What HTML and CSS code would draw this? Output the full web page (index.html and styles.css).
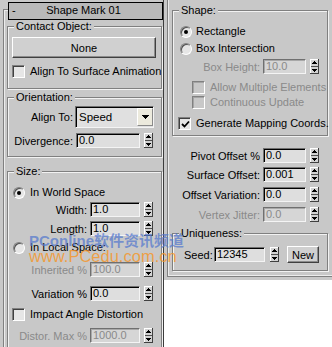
FILE: index.html
```html
<!DOCTYPE html>
<html>
<head>
<meta charset="utf-8">
<link rel="stylesheet" href="styles.css">
</head>
<body>
<svg class="defs" width="0" height="0">
  <symbol id="spin" viewBox="0 0 9 15">
    <rect width="9" height="15" fill="#404040"/>
    <rect width="8" height="14" fill="#ffffff"/>
    <rect x="1" y="1" width="7" height="13" fill="#d2d2d2"/>
    <rect x="1" y="7" width="7" height="1" fill="#505050"/>
    <rect x="4" y="2" width="1" height="1" fill="#000"/>
    <rect x="3" y="3" width="3" height="1" fill="#000"/>
    <rect x="2" y="4" width="5" height="1" fill="#000"/>
    <rect x="2" y="10" width="5" height="1" fill="#000"/>
    <rect x="3" y="11" width="3" height="1" fill="#000"/>
    <rect x="4" y="12" width="1" height="1" fill="#000"/>
  </symbol>
</svg>
<div class="screen">
  <div class="left">
    <div class="roll">
      <div class="header"><span class="minus">-</span><span class="htitle">Shape Mark 01</span><span></span></div>

      <div class="group g-contact">
        <div class="gtitle">Contact Object:</div>
        <div class="btn none">None</div>
        <div class="crow cr-align"><span class="cb"></span><span>Align To Surface Animation</span></div>
      </div>

      <div class="group g-orient">
        <div class="gtitle">Orientation:</div>
        <div class="frow fr-align">
          <span class="lbl l65">Align To:</span>
          <div class="dropdown">
            <span class="dd-text">Speed</span>
            <span class="dd-btn"><svg width="7" height="4" viewBox="0 0 7 4"><rect width="7" height="1"/><rect x="1" y="1" width="5" height="1"/><rect x="2" y="2" width="3" height="1"/><rect x="3" y="3" width="1" height="1"/></svg></span>
          </div>
        </div>
        <div class="frow fr-div">
          <span class="lbl l65">Divergence:</span>
          <span class="field w64">0.0</span>
          <svg class="spin"><use href="#spin"/></svg>
        </div>
      </div>

      <div class="group g-size">
        <div class="gtitle">Size:</div>
        <div class="rrow rr-world"><span class="rb on"></span><span>In World Space</span></div>
        <div class="frow fr-width">
          <span class="lbl l79">Width:</span>
          <span class="field w50">1.0</span>
          <svg class="spin"><use href="#spin"/></svg>
        </div>
        <div class="frow fr-length">
          <span class="lbl l79">Length:</span>
          <span class="field w50">1.0</span>
          <svg class="spin"><use href="#spin"/></svg>
        </div>
        <div class="rrow rr-local"><span class="rb"></span><span>In Local Space:</span></div>
        <div class="frow fr-inh">
          <span class="lbl l79 dim">Inherited %</span>
          <span class="field w50 dis">100.0</span>
          <svg class="spin"><use href="#spin"/></svg>
        </div>
        <div class="frow fr-var">
          <span class="lbl l79">Variation %</span>
          <span class="field w50">0.0</span>
          <svg class="spin"><use href="#spin"/></svg>
        </div>
        <div class="crow cr-impact"><span class="cb"></span><span>Impact Angle Distortion</span></div>
        <div class="frow fr-distor">
          <span class="lbl l79 dim">Distor. Max %</span>
          <span class="field w50 dis">1000.0</span>
          <svg class="spin"><use href="#spin"/></svg>
        </div>
      </div>
    </div>
  </div>

  <div class="right">
    <div class="roll2">
      <div class="group g-shape">
        <div class="gtitle">Shape:</div>
        <div class="rrow rr-rect"><span class="rb on"></span><span>Rectangle</span></div>
        <div class="rrow rr-box"><span class="rb"></span><span>Box Intersection</span></div>
        <div class="frow fr-boxh">
          <span class="lbl l87 dim">Box Height:</span>
          <span class="field w43 dis">10.0</span>
          <svg class="spin"><use href="#spin"/></svg>
        </div>
        <div class="crow cr-allow"><span class="cb dis"></span><span class="dim">Allow Multiple Elements</span></div>
        <div class="crow cr-cont"><span class="cb dis"></span><span class="dim">Continuous Update</span></div>
        <div class="crow cr-gen"><span class="cb"><svg width="9" height="9" viewBox="0 0 9 9"><polyline points="1,4 3.5,6.5 8,1.5" fill="none" stroke="#000" stroke-width="1.8"/></svg></span><span>Generate Mapping Coords.</span></div>
      </div>

      <div class="frow fr-pivot">
        <span class="lbl l92">Pivot Offset %</span>
        <span class="field w43">0.0</span>
        <svg class="spin"><use href="#spin"/></svg>
      </div>
      <div class="frow fr-surf">
        <span class="lbl l92">Surface Offset:</span>
        <span class="field w43">0.001</span>
        <svg class="spin"><use href="#spin"/></svg>
      </div>
      <div class="frow fr-offv">
        <span class="lbl l92">Offset Variation:</span>
        <span class="field w43">0.0</span>
        <svg class="spin"><use href="#spin"/></svg>
      </div>
      <div class="frow fr-vj">
        <span class="lbl l92 dim">Vertex Jitter:</span>
        <span class="field w43 dis">0.0</span>
        <svg class="spin"><use href="#spin"/></svg>
      </div>

      <div class="group g-uniq">
        <div class="gtitle">Uniqueness:</div>
        <div class="seedrow">
          <span class="seedlbl">Seed:</span>
          <span class="field w51">12345</span>
          <svg class="spin"><use href="#spin"/></svg>
          <span class="btn newbtn">New</span>
        </div>
      </div>
    </div>
  </div>

  <div class="wm wm1">PConline软件资讯频道</div>
  <div class="wm wm2">www.PCedu.com.cn</div>
</div>
</body>
</html>
```

FILE: styles.css
```css
* { box-sizing: border-box; }

body {
  margin: 0;
  background: #ffffff;
  font-family: "Liberation Sans", Arial, sans-serif;
  font-size: 11px;
  color: #000;
}

.defs { position: absolute; width: 0; height: 0; overflow: hidden; }

.screen {
  position: relative;
  display: flex;
  align-items: flex-start;
  width: 332px;
  height: 347px;
  overflow: hidden;
}

/* ---------- left panel ---------- */
.left {
  width: 164px;
  height: 347px;
  flex: none;
  background: #c8c8c8;
  border-right: 1px solid #3c3c3c;
  padding: 9px 0 0 3px;
  overflow: hidden;
}

.roll {
  height: 340px;
  border-left: 1px solid #808080;
  border-top: 1px solid #808080;
  box-shadow: inset 1px 1px 0 #ececec;
  display: flex;
  flex-direction: column;
}

.header {
  margin: -8px 0 0 4px;
  width: 155px;
  height: 18px;
  flex: none;
  border: 1px solid #000;
  background: #b9b9b9;
  display: grid;
  grid-template-columns: 10px 1fr 14px;
  line-height: 15px;
}
.minus { padding-left: 3px; }
.htitle { text-align: center; }

/* ---------- groups ---------- */
.group {
  flex: none;
  border: 1px solid #808080;
  box-shadow: 1px 1px 0 #f2f2f2, inset 1px 1px 0 #f2f2f2;
  display: flex;
  flex-direction: column;
}
.gtitle {
  align-self: flex-start;
  margin: -7px 0 0 6px;
  padding: 0 2px;
  height: 13px;
  line-height: 13px;
  background: #c8c8c8;
}

.g-contact { margin: 6px 0 0 3px; width: 155px; height: 63px; }
.g-orient  { margin: 8px 0 0 3px; width: 155px; height: 60px; }
.g-size    { margin: 14px 0 0 3px; width: 155px; height: 200px; }

.g-shape { margin: 10px 0 0 4px; width: 156px; height: 126px; }
.g-uniq  { margin: 11px 0 0 4px; width: 156px; height: 38px; }

/* ---------- buttons ---------- */
.btn {
  border: 1px solid;
  border-color: #ffffff #404040 #404040 #ffffff;
  box-shadow: inset -1px -1px 0 #8c8c8c;
  background: #d0d0d0;
  display: flex;
  align-items: center;
  justify-content: center;
}
.none { margin: 4px 0 0 4px; width: 144px; height: 21px; flex: none; }

/* ---------- rows ---------- */
.crow, .rrow {
  display: flex;
  align-items: center;
  height: 13px;
  line-height: 13px;
  flex: none;
  white-space: nowrap;
}
.crow { gap: 5px; }
.rrow { gap: 5px; }

.cr-align  { margin: 7px 0 0 4px; }
.cr-impact { margin: 7px 0 0 4px; }
.cr-allow  { margin: 7px 0 0 19px; }
.cr-cont   { margin: 2px 0 0 19px; }
.cr-gen    { margin: 8px 0 0 5px; }

.rr-world { margin: 8px 0 0 5px; }
.rr-local { margin: 5px 0 0 5px; }
.rr-rect  { margin: 8px 0 0 7px; gap: 4px; }
.rr-box   { margin: 4px 0 0 7px; gap: 4px; }

.frow {
  display: flex;
  align-items: center;
  height: 15px;
  flex: none;
  white-space: nowrap;
}
.fr-align  { margin-top: 2px; height: 22px; }
.fr-div    { margin-top: 5px; }
.fr-width  { margin-top: 3px; }
.fr-length { margin-top: 4px; }
.fr-inh    { margin-top: 8px; }
.fr-var    { margin-top: 9px; }
.fr-distor { margin-top: 7px; }
.fr-boxh   { margin-top: 4px; }
.fr-pivot  { margin-top: 12px; }
.fr-surf   { margin-top: 4px; }
.fr-offv   { margin-top: 5px; }
.fr-vj     { margin-top: 5px; }

.lbl { flex: none; text-align: right; }
.l65 { width: 65px; }
.l79 { width: 79px; }
.l87 { width: 87px; }
.l92 { width: 92px; }

.dim { color: #8a8a8a; }

/* ---------- fields ---------- */
.field {
  flex: none;
  height: 15px;
  margin-left: 3px;
  padding-left: 2px;
  line-height: 13px;
  border: 1px solid;
  border-color: #707070 #f4f4f4 #f4f4f4 #707070;
  box-shadow: inset 1px 1px 0 #000;
  background: #dedede;
  overflow: hidden;
}
.field.dis {
  color: #8a8a8a;
  box-shadow: inset 1px 1px 0 #a8a8a8;
  background: #d6d6d6;
}
.w43 { width: 43px; }
.w50 { width: 50px; }
.w51 { width: 51px; }
.w64 { width: 64px; }

.spin { flex: none; width: 9px; height: 15px; margin-left: 4px; }

/* ---------- dropdown ---------- */
.dropdown {
  margin-left: 2px;
  width: 79px;
  height: 22px;
  flex: none;
  display: flex;
  border: 1px solid;
  border-color: #707070 #f4f4f4 #f4f4f4 #707070;
  box-shadow: inset 1px 1px 0 #000;
  background: #e0e0e0;
}
.dd-text { flex: 1; padding: 1px 0 0 3px; line-height: 18px; font-size: 11.5px; }
.dd-btn {
  width: 16px;
  margin: 1px 0 1px 0;
  flex: none;
  background: #eceadd;
  border: 1px solid;
  border-color: #ffffff #8a8a8a #8a8a8a #ffffff;
  display: flex;
  align-items: center;
  justify-content: center;
}

/* ---------- checkbox / radio ---------- */
.cb {
  width: 13px;
  height: 13px;
  flex: none;
  border: 1px solid;
  border-color: #808080 #ffffff #ffffff #808080;
  box-shadow: inset 1px 1px 0 #404040;
  background: #e6e6e6;
  display: flex;
  align-items: center;
  justify-content: center;
  padding: 1px 0 0 1px;
}
.cb.dis {
  background: #c8c8c8;
  box-shadow: inset 1px 1px 0 #a4a4a4;
}

.rb {
  width: 12px;
  height: 12px;
  flex: none;
  border-radius: 50%;
  border: 1px solid;
  border-color: #808080 #ffffff #ffffff #808080;
  box-shadow: inset 1px 1px 0 #505050;
  background: #e6e6e6;
  display: flex;
  align-items: center;
  justify-content: center;
}
.rb.on::after {
  content: "";
  width: 4px;
  height: 4px;
  border-radius: 50%;
  background: #000;
}

/* ---------- right panel ---------- */
.right {
  width: 168px;
  height: 280px;
  flex: none;
  background: #c8c8c8;
  padding-left: 3px;
  overflow: hidden;
}
.roll2 {
  height: 277px;
  border-left: 1px solid #808080;
  border-bottom: 1px solid #808080;
  box-shadow: inset 1px -1px 0 #ececec;
  display: flex;
  flex-direction: column;
}

.seedrow {
  margin-top: 6px;
  padding-left: 11px;
  height: 17px;
  display: flex;
  align-items: center;
  flex: none;
}
.seedlbl { width: 29px; flex: none; }
.seedrow .field { margin-left: 1px; }
.seedrow .spin { margin-left: 5px; }
.newbtn { margin-left: 8px; width: 32px; height: 17px; flex: none; }

/* ---------- watermark overlay ---------- */
.wm {
  position: absolute;
  left: 29px;
  white-space: nowrap;
  font-family: "Liberation Sans", "Noto Sans CJK SC", sans-serif;
}
.wm1 {
  top: 233px;
  font-size: 15px;
  line-height: 15px;
  font-weight: bold;
  color: rgba(84, 120, 206, 0.72);
}
.wm2 {
  top: 248px;
  font-size: 16.5px;
  line-height: 17px;
  color: rgba(246, 150, 40, 0.82);
}
```
